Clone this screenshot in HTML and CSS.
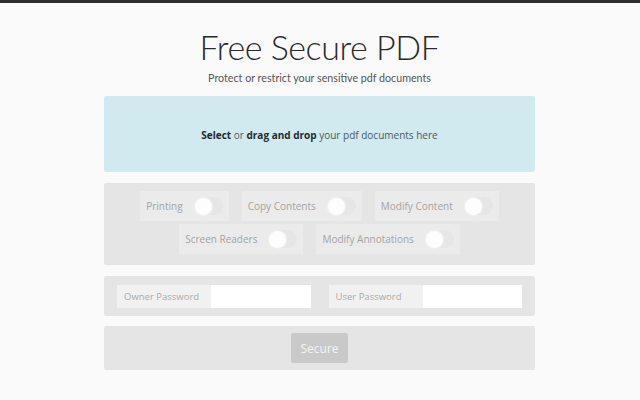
FILE: index.html
```html
<!DOCTYPE html>
<html>
<head>
<meta charset="utf-8">
<link rel="stylesheet" href="styles.css">
</head>
<body>
<div class="top-bar"></div>
<main class="page">
  <h1 class="title">Free Secure PDF</h1>
  <p class="subtitle">Protect or restrict your sensitive pdf documents</p>
  <section class="dropzone">
    <p><b>Select</b> or <b>drag and drop</b> your pdf documents here</p>
  </section>
  <section class="panel options">
    <div class="row">
      <label class="opt"><span>Printing</span><span class="toggle"><span class="knob"></span></span></label>
      <label class="opt"><span>Copy Contents</span><span class="toggle"><span class="knob"></span></span></label>
      <label class="opt"><span>Modify Content</span><span class="toggle"><span class="knob"></span></span></label>
    </div>
    <div class="row">
      <label class="opt"><span>Screen Readers</span><span class="toggle"><span class="knob"></span></span></label>
      <label class="opt"><span>Modify Annotations</span><span class="toggle"><span class="knob"></span></span></label>
    </div>
  </section>
  <section class="panel passwords">
    <div class="field"><span class="field-label">Owner Password</span><span class="field-input"></span></div>
    <div class="field"><span class="field-label">User Password</span><span class="field-input"></span></div>
  </section>
  <section class="panel actions">
    <button class="secure-btn">Secure</button>
  </section>
</main>
</body>
</html>
```
FILE: styles.css
```css
html, body {
  margin: 0;
  padding: 0;
  background: #fafafa;
  font-family: "Open Sans", "Liberation Sans", sans-serif;
}
.top-bar {
  height: 3px;
  background: #2e2e2e;
}
.page {
  width: 431px;
  margin: 0 auto;
  padding-right: 1px;
  display: flex;
  flex-direction: column;
}
.title {
  margin: 22px 0 0;
  font-family: Lato, "Open Sans", sans-serif;
  font-size: 34px;
  font-weight: 300;
  letter-spacing: -0.45px;
  line-height: 44px;
  text-align: center;
  color: #2a2a2a;
}
.subtitle {
  margin: 2px 0 0;
  font-family: Lato, "Open Sans", sans-serif;
  font-size: 10.7px;
  line-height: 14px;
  text-align: center;
  color: #555;
}
.dropzone {
  margin-top: 11px;
  height: 76px;
  padding-top: 2px;
  box-sizing: border-box;
  background: #d0eaf0;
  border-radius: 2px;
  display: flex;
  align-items: center;
  justify-content: center;
}
.dropzone p {
  margin: 0;
  font-size: 10px;
  color: #4a5a60;
}
.dropzone b {
  color: #1e2a2e;
  font-weight: 700;
}
.panel {
  background: #e5e5e5;
  border-radius: 2px;
  margin-top: 11px;
}
.options {
  height: 82px;
  padding: 8px 0;
  box-sizing: border-box;
  display: flex;
  flex-direction: column;
  gap: 3px;
}
.row {
  display: flex;
  justify-content: center;
  gap: 13px;
}
.opt {
  display: flex;
  align-items: center;
  gap: 12px;
  padding: 0 6px;
  height: 30px;
  background: #ebebeb;
  font-size: 10px;
  color: #a3a3a3;
}
.toggle {
  width: 28px;
  height: 18px;
  border-radius: 9px;
  background: #e6e6e6;
  display: flex;
  align-items: center;
}
.knob {
  width: 17px;
  height: 17px;
  border-radius: 50%;
  background: #fdfdfd;
  box-shadow: 0 0 3px rgba(255,255,255,0.9);
}
.passwords {
  height: 40px;
  padding: 0 13px;
  box-sizing: border-box;
  display: flex;
  align-items: center;
  gap: 18px;
}
.field {
  flex: 1;
  height: 23px;
  display: flex;
  background: #fff;
}
.field-label {
  width: 94px;
  background: #f1f1f1;
  font-size: 9.5px;
  color: #aaa;
  display: flex;
  align-items: center;
  padding-left: 7px;
  box-sizing: border-box;
}
.field-input {
  flex: 1;
}
.actions {
  margin-top: 10px;
  height: 44px;
  display: flex;
  align-items: center;
  justify-content: center;
}
.secure-btn {
  width: 57px;
  height: 30px;
  border: none;
  border-radius: 2px;
  background: #c9c9c9;
  color: #f4f4f4;
  font-family: "Open Sans", "Liberation Sans", sans-serif;
  font-size: 12px;
  padding: 0;
}
```
